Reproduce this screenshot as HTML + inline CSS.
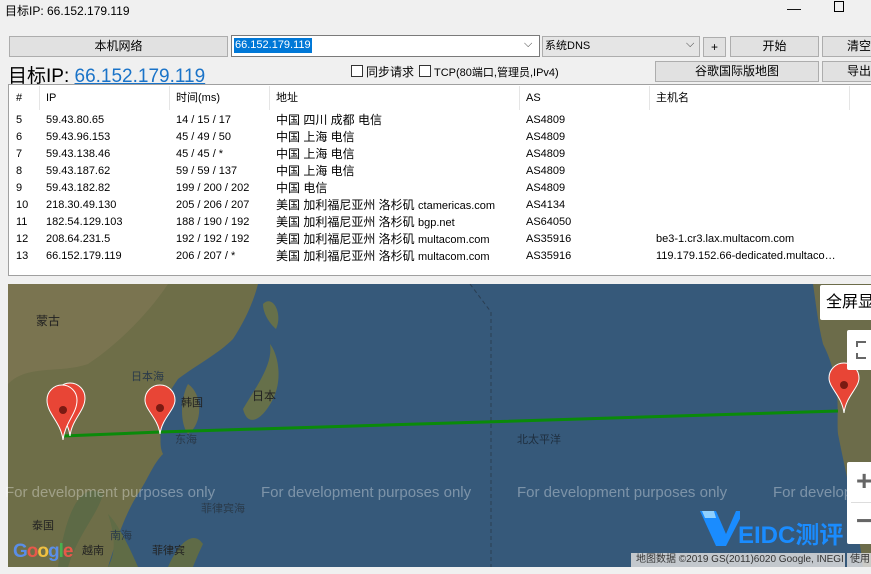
<!DOCTYPE html>
<html><head><meta charset="utf-8"><style>
*{margin:0;padding:0;box-sizing:border-box}
body{width:871px;height:574px;overflow:hidden;background:#f0f0f0;font-family:"Liberation Sans","Noto Sans CJK SC",sans-serif;font-size:12px;color:#000;position:relative}
.a{position:absolute;white-space:nowrap}
.btn{position:absolute;background:#e1e1e1;border:1px solid #adadad;text-align:center;font-size:12px;line-height:19px}
.row{position:absolute;left:16px;height:17px;font-size:11px;line-height:17px;white-space:nowrap}
.row span{position:absolute}
.lbl{position:absolute;font-size:11px;color:#222;white-space:nowrap}
.wm{position:absolute;top:484px;font-size:15px;color:rgba(255,255,255,.35);white-space:nowrap}
</style></head><body>
<div class="a" style="left:5px;top:2px;font-size:12px">目标IP: 66.152.179.119</div>
<div class="a" style="left:787px;top:0px;font-size:14px">—</div>
<div class="a" style="left:834px;top:1px;width:10px;height:11px;border:1px solid #000"></div>
<div style="position:absolute;left:0;top:24px;width:871px;height:550px;background:#f0f0f0"></div>
<div class="btn" style="left:9px;top:36px;width:219px;height:21px">本机网络</div>
<div class="a" style="left:231px;top:35px;width:309px;height:22px;background:#fff;border:1px solid #7a7a7a"></div>
<div class="a" style="left:234px;top:38px;height:15px;background:#0078d7;color:#fff;font-size:11px;line-height:15px;padding:0 1px">66.152.179.119</div>
<div class="a" style="left:524px;top:38px;font-size:11px;color:#333">⌵</div>
<div class="a" style="left:542px;top:36px;width:158px;height:21px;background:#e5e5e5;border:1px solid #adadad;font-size:11px;line-height:19px;padding-left:2px">系统DNS</div>
<div class="a" style="left:686px;top:38px;font-size:11px;color:#333">⌵</div>
<div class="btn" style="left:703px;top:37px;width:23px;height:20px">+</div>
<div class="btn" style="left:730px;top:36px;width:89px;height:21px">开始</div>
<div class="btn" style="left:822px;top:36px;width:60px;height:21px;text-align:left;padding-left:24px">清空</div>
<div class="a" style="left:8px;top:61px;font-size:19px">目标IP: <span style="color:#1a73c8;text-decoration:underline">66.152.179.119</span></div>
<div class="a" style="left:351px;top:65px;width:12px;height:12px;border:1px solid #333;background:#fff"></div>
<div class="a" style="left:366px;top:63px;font-size:12px">同步请求</div>
<div class="a" style="left:419px;top:65px;width:12px;height:12px;border:1px solid #333;background:#fff"></div>
<div class="a" style="left:434px;top:64px;font-size:11px">TCP(80端口,管理员,IPv4)</div>
<div class="btn" style="left:655px;top:61px;width:164px;height:21px">谷歌国际版地图</div>
<div class="btn" style="left:822px;top:61px;width:60px;height:21px;text-align:left;padding-left:24px">导出</div>
<div class="a" style="left:8px;top:84px;width:870px;height:192px;background:#fff;border:1px solid #a0a0a0"></div>
<div class="row" style="top:90px;font-size:11px"><span style="left:0">#</span><span style="left:30px">IP</span><span style="left:160px">时间(ms)</span><span style="left:260px">地址</span><span style="left:510px">AS</span><span style="left:640px">主机名</span></div>
<div class="a" style="left:39px;top:86px;width:1px;height:24px;background:#e5e5e5"></div>
<div class="a" style="left:169px;top:86px;width:1px;height:24px;background:#e5e5e5"></div>
<div class="a" style="left:269px;top:86px;width:1px;height:24px;background:#e5e5e5"></div>
<div class="a" style="left:519px;top:86px;width:1px;height:24px;background:#e5e5e5"></div>
<div class="a" style="left:649px;top:86px;width:1px;height:24px;background:#e5e5e5"></div>
<div class="a" style="left:849px;top:86px;width:1px;height:24px;background:#e5e5e5"></div>
<div class="row" style="top:112px"><span style="left:0">5</span><span style="left:30px">59.43.80.65</span><span style="left:160px">14 / 15 / 17</span><span style="left:260px;font-size:12px">中国 四川 成都 电信</span><span style="left:510px">AS4809</span></div>
<div class="row" style="top:129px"><span style="left:0">6</span><span style="left:30px">59.43.96.153</span><span style="left:160px">45 / 49 / 50</span><span style="left:260px;font-size:12px">中国 上海 电信</span><span style="left:510px">AS4809</span></div>
<div class="row" style="top:146px"><span style="left:0">7</span><span style="left:30px">59.43.138.46</span><span style="left:160px">45 / 45 / *</span><span style="left:260px;font-size:12px">中国 上海 电信</span><span style="left:510px">AS4809</span></div>
<div class="row" style="top:163px"><span style="left:0">8</span><span style="left:30px">59.43.187.62</span><span style="left:160px">59 / 59 / 137</span><span style="left:260px;font-size:12px">中国 上海 电信</span><span style="left:510px">AS4809</span></div>
<div class="row" style="top:180px"><span style="left:0">9</span><span style="left:30px">59.43.182.82</span><span style="left:160px">199 / 200 / 202</span><span style="left:260px;font-size:12px">中国 电信</span><span style="left:510px">AS4809</span></div>
<div class="row" style="top:197px"><span style="left:0">10</span><span style="left:30px">218.30.49.130</span><span style="left:160px">205 / 206 / 207</span><span style="left:260px;font-size:12px">美国 加利福尼亚州 洛杉矶 <span style="position:static;font-size:11px">ctamericas.com</span></span><span style="left:510px">AS4134</span></div>
<div class="row" style="top:214px"><span style="left:0">11</span><span style="left:30px">182.54.129.103</span><span style="left:160px">188 / 190 / 192</span><span style="left:260px;font-size:12px">美国 加利福尼亚州 洛杉矶 <span style="position:static;font-size:11px">bgp.net</span></span><span style="left:510px">AS64050</span></div>
<div class="row" style="top:231px"><span style="left:0">12</span><span style="left:30px">208.64.231.5</span><span style="left:160px">192 / 192 / 192</span><span style="left:260px;font-size:12px">美国 加利福尼亚州 洛杉矶 <span style="position:static;font-size:11px">multacom.com</span></span><span style="left:510px">AS35916</span><span style="left:640px">be3-1.cr3.lax.multacom.com</span></div>
<div class="row" style="top:248px"><span style="left:0">13</span><span style="left:30px">66.152.179.119</span><span style="left:160px">206 / 207 / *</span><span style="left:260px;font-size:12px">美国 加利福尼亚州 洛杉矶 <span style="position:static;font-size:11px">multacom.com</span></span><span style="left:510px">AS35916</span><span style="left:640px">119.179.152.66-dedicated.multaco…</span></div>

<svg class="a" style="left:8px;top:284px" width="863" height="283" viewBox="0 0 863 283">
<rect width="863" height="283" fill="#36597a"/>
<path d="M0 0 H250 C245 20 235 40 225 55 C210 70 190 80 170 95 C160 110 150 125 150 140 C155 150 150 160 155 170 C145 180 140 195 130 210 C120 225 110 250 100 283 H0Z" fill="#6e6e48"/>
<path d="M0 0 H160 C140 30 110 60 80 80 C50 90 20 80 0 100Z" fill="#7a7450"/>
<path d="M60 283 C70 250 90 230 95 210 C80 200 60 210 50 283Z" fill="#5d6a46"/>
<path d="M180 100 C195 110 195 140 180 150 C172 140 172 115 180 100Z" fill="#6b6e4a"/>
<path d="M235 125 C250 100 265 80 262 60 C270 70 275 95 265 115 C255 135 240 145 235 125Z" fill="#66704a"/>
<path d="M255 20 C265 10 275 30 268 45 C262 40 255 30 255 20Z" fill="#66704a"/>
<path d="M100 230 C105 245 110 265 100 283 H130 C120 260 110 240 100 230Z" fill="#606c46"/>
<path d="M160 283 C170 260 185 245 195 260 C190 270 185 283 185 283Z" fill="#5f6b47"/>
<path d="M805 0 H863 V283 H855 C850 240 840 200 830 150 C828 130 835 100 815 60 C810 40 808 20 805 0Z" fill="#6c6c4a"/>
<line x1="483" y1="28" x2="483" y2="283" stroke="#2a3e52" stroke-dasharray="4,3"/>
<line x1="462" y1="0" x2="483" y2="28" stroke="#2a3e52" stroke-dasharray="4,3"/>
<polyline points="55,152 152,148 830,127" fill="none" stroke="#0a8a0a" stroke-width="3"/>
<g fill="#e84536" stroke="#fff" stroke-width="1">
<path d="M62 152 C60 135 47 127 47 114 A15 15 0 0 1 77 114 C77 127 64 135 62 152Z"/>
<path d="M55 156 C53 138 39 130 39 116 A15 15 0 0 1 69 116 C69 130 57 138 55 156Z"/>
<path d="M152 150 C150 134 137 126 137 116 A15 15 0 0 1 167 116 C167 126 154 134 152 150Z"/>
<path d="M836 129 C834 112 821 104 821 94 A15 15 0 0 1 851 94 C851 104 838 112 836 129Z"/>
</g>
<g fill="#7a1a12"><circle cx="55" cy="126" r="4"/><circle cx="152" cy="124" r="4"/><circle cx="836" cy="101" r="4"/></g>
</svg>
<div class="lbl" style="left:36px;top:312px;font-size:12px">蒙古</div>
<div class="lbl" style="left:131px;top:368px;color:#2a3a4a;font-size:11px">日本海</div>
<div class="lbl" style="left:252px;top:387px;font-size:12px">日本</div>
<div class="lbl" style="left:181px;top:394px">韩国</div>
<div class="lbl" style="left:175px;top:431px;color:#2a3a4a">东海</div>
<div class="lbl" style="left:517px;top:431px;color:#1e2e3e">北太平洋</div>
<div class="lbl" style="left:201px;top:500px;color:#2a3a4a">菲律宾海</div>
<div class="lbl" style="left:32px;top:517px">泰国</div>
<div class="lbl" style="left:110px;top:527px;color:#2a3a4a">南海</div>
<div class="lbl" style="left:82px;top:542px">越南</div>
<div class="lbl" style="left:152px;top:542px">菲律宾</div>
<div class="wm" style="left:5px">For development purposes only</div>
<div class="wm" style="left:261px">For development purposes only</div>
<div class="wm" style="left:517px">For development purposes only</div>
<div class="wm" style="left:773px">For develop</div>
<div class="a" style="left:13px;top:541px;font-size:19px;font-weight:bold;letter-spacing:-1px"><span style="color:#5a8ee8">G</span><span style="color:#e8584a">o</span><span style="color:#f0c040">o</span><span style="color:#5a8ee8">g</span><span style="color:#4ab050">l</span><span style="color:#e8584a">e</span></div>
<div class="a" style="left:820px;top:285px;width:60px;height:35px;background:#fff;border-radius:2px;font-size:16px;line-height:35px;padding-left:6px">全屏显</div>
<div class="a" style="left:847px;top:330px;width:30px;height:40px;background:#fff;border-radius:2px"></div>
<div class="a" style="left:856px;top:341px;width:10px;height:18px;border:2px dashed #666;border-right:none"></div>
<div class="a" style="left:847px;top:462px;width:30px;height:82px;background:#fff;border-radius:2px"></div>
<div class="a" style="left:851px;top:502px;width:26px;height:1px;background:#ddd"></div>
<div class="a" style="left:856px;top:465px;font-size:28px;color:#666;font-weight:bold">+</div>
<div class="a" style="left:856px;top:505px;font-size:28px;color:#666;font-weight:bold">−</div>
<svg class="a" style="left:700px;top:508px" width="40" height="40"><polygon points="0,3 16,3 26,26 36,3 44,3 26,38 16,38" fill="#1a8cff"/><polygon points="2,3 14,3 16,10 5,10" fill="#8fd0ff"/></svg>
<div class="a" style="left:738px;top:515px;font-size:24px;color:#1a8cff;font-weight:bold">EIDC测评</div>
<div class="a" style="left:631px;top:553px;width:214px;height:14px;background:rgba(220,220,220,.85);font-size:10px;line-height:14px;padding-left:5px;color:#333">地图数据 ©2019 GS(2011)6020 Google, INEGI</div>
<div class="a" style="left:847px;top:553px;width:30px;height:14px;background:rgba(220,220,220,.85);font-size:10px;line-height:14px;padding-left:3px;color:#333">使用</div>
</body></html>
